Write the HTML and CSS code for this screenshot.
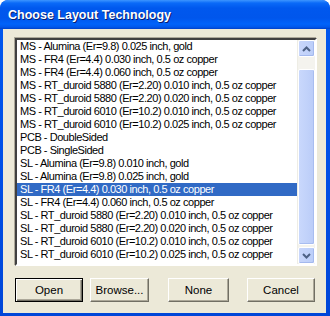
FILE: index.html
```html
<!DOCTYPE html>
<html>
<head>
<meta charset="utf-8">
<link rel="stylesheet" href="styles.css">
</head>
<body>
<div class="window">
  <div class="titlebar"><span class="title">Choose Layout Technology</span></div>
  <div class="client">
    <div class="listbox">
      <ul class="items">
        <li>MS - Alumina (Er=9.8) 0.025 inch, gold</li>
        <li>MS - FR4 (Er=4.4) 0.030 inch, 0.5 oz copper</li>
        <li>MS - FR4 (Er=4.4) 0.060 inch, 0.5 oz copper</li>
        <li>MS - RT_duroid 5880 (Er=2.20) 0.010 inch, 0.5 oz copper</li>
        <li>MS - RT_duroid 5880 (Er=2.20) 0.020 inch, 0.5 oz copper</li>
        <li>MS - RT_duroid 6010 (Er=10.2) 0.010 inch, 0.5 oz copper</li>
        <li>MS - RT_duroid 6010 (Er=10.2) 0.025 inch, 0.5 oz copper</li>
        <li>PCB - DoubleSided</li>
        <li>PCB - SingleSided</li>
        <li>SL - Alumina (Er=9.8) 0.010 inch, gold</li>
        <li>SL - Alumina (Er=9.8) 0.025 inch, gold</li>
        <li class="selected">SL - FR4 (Er=4.4) 0.030 inch, 0.5 oz copper</li>
        <li>SL - FR4 (Er=4.4) 0.060 inch, 0.5 oz copper</li>
        <li>SL - RT_duroid 5880 (Er=2.20) 0.010 inch, 0.5 oz copper</li>
        <li>SL - RT_duroid 5880 (Er=2.20) 0.020 inch, 0.5 oz copper</li>
        <li>SL - RT_duroid 6010 (Er=10.2) 0.010 inch, 0.5 oz copper</li>
        <li>SL - RT_duroid 6010 (Er=10.2) 0.025 inch, 0.5 oz copper</li>
      </ul>
      <div class="scrollbar">
        <div class="sbtn"><svg width="9" height="6" viewBox="0 0 9 6"><path d="M1 5 L4.5 1.5 L8 5" fill="none" stroke="#4D6185" stroke-width="2"/></svg></div>
        <div class="track"><div class="thumb"></div></div>
        <div class="sbtn"><svg width="9" height="6" viewBox="0 0 9 6"><path d="M1 1 L4.5 4.5 L8 1" fill="none" stroke="#4D6185" stroke-width="2"/></svg></div>
      </div>
    </div>
    <div class="buttons">
      <button class="btn default b-open">Open</button>
      <button class="btn b-browse">Browse...</button>
      <button class="btn b-none">None</button>
      <button class="btn b-cancel">Cancel</button>
    </div>
  </div>
</div>
</body>
</html>
```
FILE: styles.css
```css
html, body {
  margin: 0;
  padding: 0;
  background: #ffffff;
}
.window {
  width: 330px;
  height: 316px;
  box-sizing: border-box;
  display: flex;
  flex-direction: column;
  border-radius: 8px 8px 0 0;
  background: linear-gradient(to bottom, #0058EE 0%, #0050E8 50%, #0046D8 100%);
  padding: 0 4px 3px 3px;
  overflow: hidden;
}
.titlebar {
  height: 29px;
  flex: none;
  margin: 0 -4px 0 -3px;
  padding-left: 8px;
  display: flex;
  align-items: center;
  border-radius: 8px 8px 0 0;
  background: linear-gradient(to bottom, #3D95FF 0px, #0A6AF8 3px, #0058EE 8px, #0056EC 18px, #0063FA 24px, #0058EC 27px, #0041C8 29px);
}
.title {
  font-family: "Liberation Sans", Arial, sans-serif;
  font-weight: bold;
  font-size: 12.5px;
  color: #ffffff;
  text-shadow: 1px 1px 0 #0A1E6E;
}
.client {
  flex: 1;
  background: #ECE9D8;
  padding: 9px 0 0 12px;
  display: flex;
  flex-direction: column;
}
.listbox {
  width: 302px;
  height: 228px;
  box-sizing: border-box;
  border-style: solid;
  border-width: 2px;
  border-color: #404040 #ffffff #ffffff #404040;
  box-shadow: -1px -1px 0 #ACA899;
  background: #ffffff;
  display: flex;
}
.items {
  list-style: none;
  margin: 0;
  padding: 0;
  flex: 1;
  overflow: hidden;
}
.items li {
  height: 13px;
  line-height: 13px;
  padding-left: 3px;
  font-family: "Liberation Sans", Arial, sans-serif;
  font-size: 11px;
  letter-spacing: -0.45px;
  color: #000000;
  white-space: nowrap;
}
.items li.selected {
  background: #316AC5;
  color: #ffffff;
}
.scrollbar {
  width: 17px;
  flex: none;
  display: flex;
  flex-direction: column;
  background: #F4F3EE;
  border-left: 1px solid #EEEDE5;
}
.sbtn {
  height: 17px;
  flex: none;
  box-sizing: border-box;
  border: 1px solid #FFFFFF;
  border-radius: 2px;
  background: linear-gradient(to right, #C8D6FB, #BBCEF9);
  box-shadow: inset -1px -1px 0 #A4B9EE;
  display: flex;
  align-items: center;
  justify-content: center;
}
.track {
  flex: 1;
  padding: 12px 0 2px 0;
  display: flex;
}
.thumb {
  flex: 1;
  border: 1px solid #FFFFFF;
  border-radius: 2px;
  background: linear-gradient(to right, #C9D8FC, #BACCF8);
  box-shadow: inset -1px -1px 0 #A8BDF0;
}
.buttons {
  display: flex;
  margin-top: 12px;
  height: 24px;
}
.btn {
  height: 24px;
  box-sizing: border-box;
  padding: 0;
  margin: 0;
  font-family: "Liberation Sans", Arial, sans-serif;
  font-size: 11.5px;
  color: #000000;
  background: #ECE9D8;
  border-style: solid;
  border-width: 1px;
  border-color: #FFFFFF #716F64 #716F64 #FFFFFF;
  box-shadow: inset -1px -1px 0 #ACA899;
  border-radius: 0;
}
.btn.default {
  border: 1px solid #000000;
  box-shadow: inset 1px 1px 0 #FFFFFF, inset -1px -1px 0 #716F64, inset -2px -2px 0 #ACA899;
}
.b-open { width: 68px; }
.b-browse { width: 59px; margin-left: 7px; }
.b-none { width: 61px; margin-left: 19px; }
.b-cancel { width: 68px; margin-left: 18px; }
```
